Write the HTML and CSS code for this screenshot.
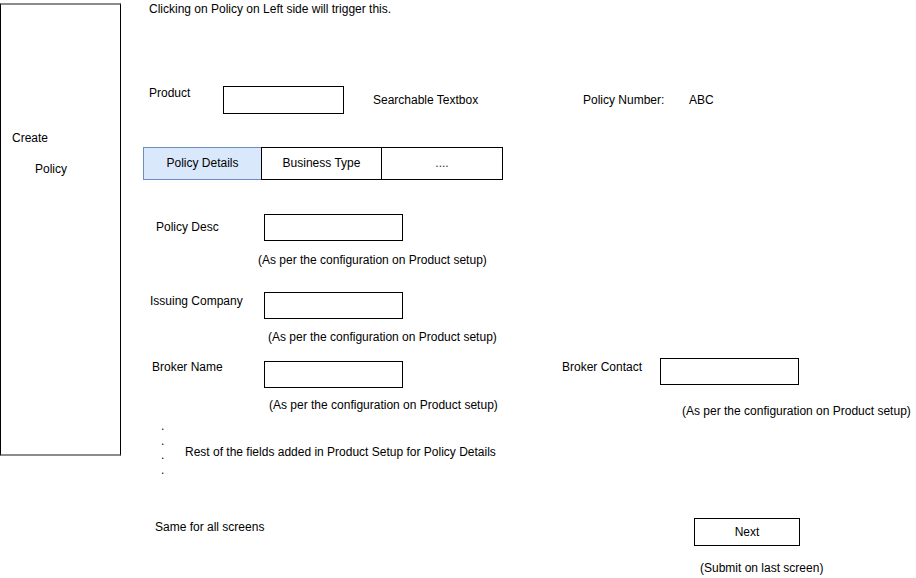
FILE: index.html
```html
<!DOCTYPE html>
<html>
<head>
<meta charset="utf-8">
<link rel="stylesheet" href="styles.css">
</head>
<body>
<div class="page">
  <aside class="sidebar">
    <div class="side-create">Create</div>
    <div class="side-policy">Policy</div>
  </aside>
  <main class="main">
    <div class="row title-row">Clicking on Policy on Left side will trigger this.</div>

    <div class="row product-row">
      <div class="lbl product-lbl">Product</div>
      <div class="box product-box"></div>
      <div class="lbl search-lbl">Searchable Textbox</div>
      <div class="lbl pn-lbl">Policy Number:</div>
      <div class="lbl pn-val">ABC</div>
    </div>

    <div class="row tabs">
      <div class="tab tab-active">Policy Details</div>
      <div class="tab tab-2">Business Type</div>
      <div class="tab tab-3">....</div>
    </div>

    <div class="row desc-row">
      <div class="lbl desc-lbl">Policy Desc</div>
      <div class="box field-box"></div>
    </div>
    <div class="row note note1">(As per the configuration on Product setup)</div>

    <div class="row issuing-row">
      <div class="lbl issuing-lbl">Issuing Company</div>
      <div class="box field-box"></div>
    </div>
    <div class="row note note2">(As per the configuration on Product setup)</div>

    <div class="row broker-row">
      <div class="lbl bn-lbl">Broker Name</div>
      <div class="box field-box bn-box"></div>
      <div class="lbl bc-lbl">Broker Contact</div>
      <div class="box field-box bc-box"></div>
    </div>
    <div class="row notes-row">
      <div class="note note3">(As per the configuration on Product setup)</div>
      <div class="note note4">(As per the configuration on Product setup)</div>
    </div>

    <div class="row rest-row">
      <div class="dots">.<br>.<br>.<br>.</div>
      <div class="rest">Rest of the fields added in Product Setup for Policy Details</div>
    </div>

    <div class="row bottom-row">
      <div class="lbl same-lbl">Same for all screens</div>
      <div class="box next-btn">Next</div>
    </div>
    <div class="row submit">(Submit on last screen)</div>
  </main>
</div>
</body>
</html>
```
FILE: styles.css
```css
html, body {
  margin: 0;
  padding: 0;
  background: #ffffff;
}
body {
  font-family: "Liberation Sans", Arial, Helvetica, sans-serif;
  font-size: 12px;
  line-height: 14px;
  color: #000000;
  width: 916px;
  height: 578px;
  overflow: hidden;
}
.page {
  display: flex;
  align-items: flex-start;
}
.sidebar {
  width: 121px;
  height: 453px;
  margin-top: 3px;
  border-left: 1px solid #000000;
  border-right: 1px solid #000000;
  border-top: 2px solid #8c8c8c;
  border-bottom: 2px solid #8c8c8c;
  box-sizing: border-box;
  flex: none;
}
.side-create {
  margin-top: 126px;
  margin-left: 11px;
}
.side-policy {
  margin-top: 17px;
  margin-left: 34px;
}
.main {
  flex: 1;
  display: flex;
  flex-direction: column;
}
.row {
  display: flex;
  align-items: flex-start;
  white-space: nowrap;
}
.box {
  border: 1px solid #000000;
  box-sizing: border-box;
  background: #ffffff;
  flex: none;
}
.lbl { flex: none; }

.title-row {
  margin-top: 2px;
  margin-left: 28px;
  height: 16px;
}

.product-row {
  margin-top: 66px;
  height: 29px;
}
.product-lbl { margin-left: 28px; width: 74px; margin-top: 2px; }
.product-box { width: 121px; height: 28px; margin-top: 2px; }
.search-lbl { margin-left: 29px; width: 210px; margin-top: 9px; }
.pn-lbl { width: 106px; margin-top: 9px; }
.pn-val { margin-top: 9px; }

.tabs {
  margin-top: 34px;
  margin-left: 22px;
  height: 33px;
}
.tab {
  height: 33px;
  box-sizing: border-box;
  border: 1px solid #000000;
  display: flex;
  align-items: center;
  justify-content: center;
  padding-bottom: 2px;
  background: #ffffff;
  flex: none;
}
.tab-active {
  width: 119px;
  background: #dae8fc;
  border-color: #6c8ebf;
}
.tab-2 { width: 121px; margin-left: -1px; }
.tab-3 { width: 122px; margin-left: -1px; color: #333333; }

.desc-row { margin-top: 34px; height: 28px; }
.desc-lbl { margin-left: 35px; width: 108px; margin-top: 6px; }
.field-box { width: 139px; height: 27px; }

.note1 { margin-top: 11px; margin-left: 137px; height: 14px; }

.issuing-row { margin-top: 25px; height: 28px; }
.issuing-lbl { margin-left: 29px; width: 114px; margin-top: 2px; }

.note2 { margin-top: 10px; margin-left: 147px; height: 14px; }

.broker-row { margin-top: 14px; height: 30px; }
.bn-lbl { margin-left: 31px; width: 112px; margin-top: 2px; }
.bn-box { margin-top: 3px; height: 27px; }
.bc-lbl { margin-left: 159px; width: 98px; margin-top: 2px; }
.bc-box { height: 27px; }

.notes-row { margin-top: 10px; height: 19px; }
.note3 { margin-left: 148px; width: 413px; flex: none; }
.note4 { margin-top: 6px; flex: none; }

.rest-row { margin-top: 1px; height: 56px; }
.dots { margin-left: 40px; width: 24px; flex: none; line-height: 14.67px; padding-top: 1px; }
.rest { margin-top: 27px; }

.bottom-row { margin-top: 44px; height: 28px; }
.same-lbl { margin-left: 34px; width: 539px; margin-top: 2px; }
.next-btn {
  width: 106px;
  height: 28px;
  display: flex;
  align-items: center;
  justify-content: center;
}

.submit { margin-top: 15px; margin-left: 579px; }
```
